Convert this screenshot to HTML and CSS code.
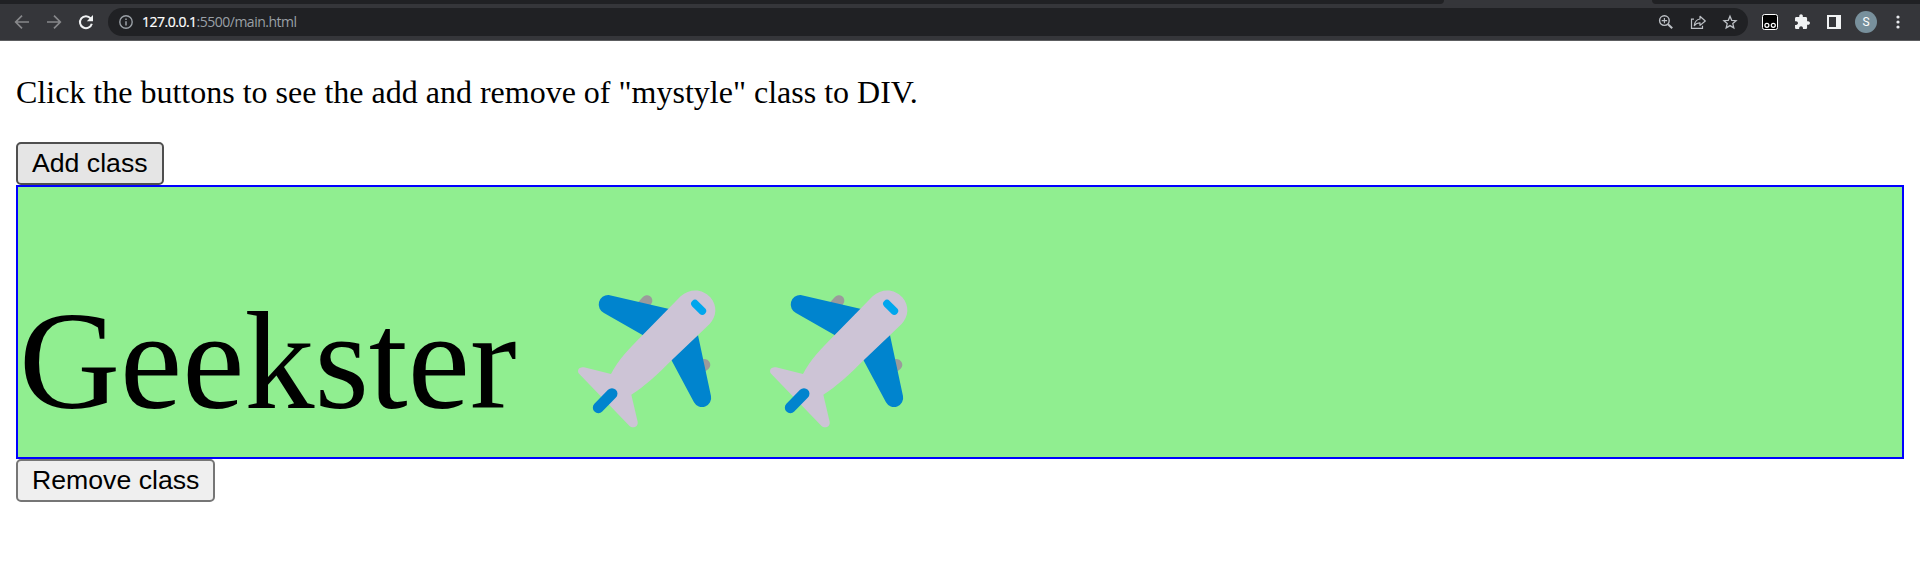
FILE: index.html
```html
<!DOCTYPE html>
<html lang="en">
<head>
<meta charset="utf-8">
<title>main.html</title>
<link rel="stylesheet" href="styles.css">
</head>
<body>
<header class="browser">
  <div class="tabstrip"><div class="tab-rest tab-rest-left"></div><div class="tab-active"></div><div class="tab-rest tab-rest-right"></div></div>
  <div class="toolbar">
    <svg class="nav-icons" width="108" height="36" viewBox="0 4 108 36" fill="none">
      <path d="M29 22H16M22 15.7L15.7 22L22 28.3" stroke="#87888b" stroke-width="1.7"/>
      <path d="M47 22H60M54 15.7L60.3 22L54 28.3" stroke="#87888b" stroke-width="1.7"/>
      <path d="M90.6 18.3A6 6 0 1 0 91.8 23.7" stroke="#f1f3f4" stroke-width="2"/>
      <path d="M93 15V21.2H86.8Z" fill="#f1f3f4"/>
    </svg>
    <div class="omnibox">
      <svg class="info" width="14" height="14" viewBox="0 0 14 14" fill="none"><circle cx="7" cy="7" r="6.2" stroke="#9aa0a6" stroke-width="1.4"/><path d="M7 6.2V10.4M7 3.6V5" stroke="#9aa0a6" stroke-width="1.5"/></svg>
      <span class="url"><span class="host">127.0.0.1</span>:5500/main.html</span>
      <svg class="page-actions" width="88" height="28" viewBox="1655 8 88 28" fill="none" stroke="#bdc1c6" stroke-width="1.4">
        <circle cx="1664.4" cy="20.6" r="4.8"/><path d="M1661.7 20.6H1667.1M1664.4 17.9V23.3" stroke-width="1.1"/><path d="M1668 24.2L1672.2 28.2" stroke-width="2"/>
        <path d="M1694 19.2H1691.5V28.4H1702.5V25.8" stroke-width="1.2"/><path d="M1700 16.3L1705.3 21L1700 25.4V22.8C1697.3 22.7 1695.8 23.7 1694.3 25.5C1694.8 21.7 1696.6 19.5 1700 19Z" stroke-width="1.2" stroke-linejoin="round"/>
        <path d="M1730 16.2L1731.7 20.3L1736.1 20.7L1732.8 23.6L1733.8 27.9L1730 25.6L1726.2 27.9L1727.2 23.6L1723.9 20.7L1728.3 20.3Z" stroke-width="1.3"/>
      </svg>
    </div>
    <div class="extensions">
      <svg width="90" height="36" viewBox="1756 4 90 36">
        <rect x="1762.5" y="14.5" width="15" height="15" rx="2" fill="#000" stroke="#fff"/>
        <circle cx="1766.9" cy="25.3" r="2" fill="none" stroke="#fff" stroke-width="1.2"/><circle cx="1773.3" cy="25.3" r="2" fill="none" stroke="#fff" stroke-width="1.2"/>
        <path transform="translate(1793.6 13.5) scale(.71)" fill="#f1f3f4" d="M20.5 11H19V7c0-1.100-.9-2-2-2h-4V3.500C13 2.120 11.880 1 10.500 1S8 2.120 8 3.500V5H4c-1.100 0-1.990.9-1.990 2v3.800H3.500c1.490 0 2.700 1.210 2.700 2.700s-1.210 2.700-2.700 2.700H2V20c0 1.100.9 2 2 2h3.800v-1.500c0-1.490 1.210-2.700 2.700-2.700s2.700 1.210 2.700 2.700V22H17c1.100 0 2-.9 2-2v-4h1.500c1.380 0 2.500-1.120 2.500-2.500S21.880 11 20.500 11z"/>
        <path fill="#f1f3f4" fill-rule="evenodd" d="M1827 15H1841V29H1827ZM1829 17V27H1836V17Z"/>
      </svg>
      <span class="avatar">S</span>
      <svg class="menu" width="4" height="14" viewBox="0 0 4 14" fill="#e8eaed"><circle cx="2" cy="2" r="1.6"/><circle cx="2" cy="7" r="1.6"/><circle cx="2" cy="12" r="1.6"/></svg>
    </div>
  </div>
</header>
<main class="page">
  <p class="intro">Click the buttons to see the add and remove of "mystyle" class to DIV.</p>
  <button class="btn btn-hover">Add class</button>
  <div class="mystyle">
    <span class="word">Geekster</span>
    <svg class="plane" viewBox="-28 0 577 540"><use href="#plane"/></svg><svg class="plane" viewBox="-28 0 577 540">
      <g id="plane">
        <path d="M232 98L247 82A16 16 0 0 1 273 101L266 112ZM428 268A17 17 0 0 1 445 296L433 306Z" fill="#9b9b9b"/>
        <path d="M145 75L330 118L248 196L131 129A28.500 28.500 0 0 1 145 75ZM413 195L452 378A27.500 27.500 0 0 1 401 397L332 268Z" fill="#0084ce"/>
        <path d="M361 79C391 51 431 59 450 82C472 108 469 140 448 162L334 271C290 315 252 350 213 374L232 455C235 470 217 478 207 467L57 312C48 302 56 289 71 292L152 312C173 270 207 235 248 194Z" fill="#cdc4d6"/>
        <path d="M114 413L155 371" stroke="#0084ce" stroke-width="33" stroke-linecap="round"/>
        <path d="M404 101L426 123" stroke="#00a6ed" stroke-width="23" stroke-linecap="round"/>
      </g>
    </svg>
  </div>
  <button class="btn">Remove class</button>
</main>
</body>
</html>
```
FILE: styles.css
```css
body { margin: 0; background: #fff; overflow: hidden; }
.browser { height: 41px; }
.tabstrip { display: flex; height: 4px; background: #35363a; }
.tab-rest { background: #202124; }
.tab-rest-left { width: 1444px; border-bottom-right-radius: 5px; }
.tab-active { width: 208px; }
.tab-rest-right { flex: 1; border-bottom-left-radius: 5px; }
.toolbar { display: flex; box-sizing: border-box; height: 37px; background: #35363a; border-bottom: 1px solid #5c5d60; }
.nav-icons { flex: none; }
.omnibox { display: flex; align-items: center; box-sizing: border-box; width: 1640px; height: 28px; margin-top: 4px; padding: 0 5px 0 11px; border-radius: 14px; background: #202124; }
.url { margin-left: 9px; font: 14px/28px "Open Sans", "Noto Sans", sans-serif; color: #9aa0a6; letter-spacing: -0.5px; }
.host { color: #fff; -webkit-text-stroke: 0.2px #fff; }
.page-actions { margin-left: auto; }
.extensions { display: flex; align-items: center; flex: 1; padding-left: 8px; }
.avatar { width: 22px; height: 22px; margin-left: 9px; border-radius: 50%; background: #78909c; color: #fff; font: 12px/22px Roboto, sans-serif; text-align: center; }
.menu { margin-left: 19px; }
.page { display: flex; flex-direction: column; align-items: flex-start; padding: 33px 16px 0; }
.intro { margin: 0 0 31px; font: 32px/37px "Liberation Serif", serif; color: #000; }
.btn { box-sizing: border-box; height: 43px; margin: 0; padding: 0 14px 2px; border: 2px solid #767676; border-radius: 5px; background: #efefef; color: #000; font: 26.667px/30px "Liberation Sans", Arial, sans-serif; }
.btn-hover { background: #e5e5e5; border-color: #4f4f4f; }
.mystyle { display: flex; align-items: flex-start; align-self: stretch; box-sizing: border-box; height: 274px; padding: 83px 0 0 1px; border: 2px solid #00f; background: #90ee90; }
.word { margin: 21px 34px 0 0; font: 140px/140px "Liberation Serif", serif; color: #000; }
.plane { flex: none; width: 192.3px; height: 180px; }
```
